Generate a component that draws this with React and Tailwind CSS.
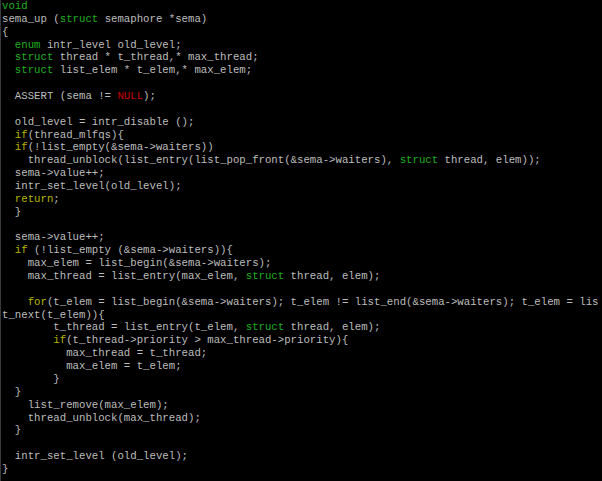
import React from 'react';

// tiny tokenizer: g = green type keyword, y = yellow control keyword, r = red constant
const K = (t) => ({ t, c: 'g' });
const Y = (t) => ({ t, c: 'y' });
const R = (t) => ({ t, c: 'r' });

const lines = [
  [K('void')],
  ['sema_up (', K('struct'), ' semaphore *sema)'],
  ['{'],
  ['  ', K('enum'), ' intr_level old_level;'],
  ['  ', K('struct'), ' thread * t_thread,* max_thread;'],
  ['  ', K('struct'), ' list_elem * t_elem,* max_elem;'],
  [''],
  ['  ASSERT (sema != ', R('NULL'), ');'],
  [''],
  ['  old_level = intr_disable ();'],
  ['  ', Y('if'), '(thread_mlfqs){'],
  ['  ', Y('if'), '(!list_empty(&sema->waiters))'],
  ['    thread_unblock(list_entry(list_pop_front(&sema->waiters), ', K('struct'), ' thread, elem));'],
  ['  sema->value++;'],
  ['  intr_set_level(old_level);'],
  ['  ', Y('return'), ';'],
  ['  }'],
  [''],
  ['  sema->value++;'],
  ['  ', Y('if'), ' (!list_empty (&sema->waiters)){'],
  ['    max_elem = list_begin(&sema->waiters);'],
  ['    max_thread = list_entry(max_elem, ', K('struct'), ' thread, elem);'],
  [''],
  ['    ', Y('for'), '(t_elem = list_begin(&sema->waiters); t_elem != list_end(&sema->waiters); t_elem = lis'],
  ['t_next(t_elem)){'],
  ['        t_thread = list_entry(t_elem, ', K('struct'), ' thread, elem);'],
  ['        ', Y('if'), '(t_thread->priority > max_thread->priority){'],
  ['          max_thread = t_thread;'],
  ['          max_elem = t_elem;'],
  ['        }'],
  ['  }'],
  ['    list_remove(max_elem);'],
  ['    thread_unblock(max_thread);'],
  ['  }'],
  [''],
  ['  intr_set_level (old_level);'],
  ['}'],
];

const colors = {
  g: 'text-[#1fb01f]',
  y: 'text-[#b4b400]',
  r: 'text-[#c80000]',
};

const App = () => {
  return (
    <div className="w-[602px] h-[481px] bg-black border-l border-[#3a3a3a] overflow-hidden pl-px">
      <pre className="font-['Liberation_Mono','Courier_New',monospace] text-[10.7px] leading-[12.86px] text-[#bdbdbd] whitespace-pre">
        {lines.map((segs, i) => (
          <div key={i} className="h-[12.86px]">
            {segs.map((s, j) =>
              typeof s === 'string' ? (
                <span key={j}>{s}</span>
              ) : (
                <span key={j} className={colors[s.c]}>{s.t}</span>
              )
            )}
          </div>
        ))}
      </pre>
    </div>
  );
};

export default App;
